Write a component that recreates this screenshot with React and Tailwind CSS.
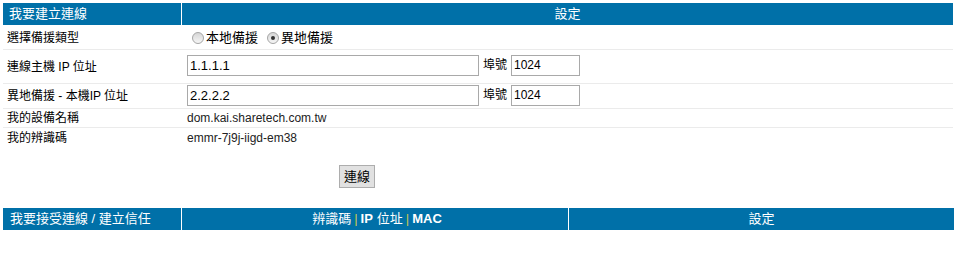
import React from "react";

const CJK = "font-['Liberation_Sans','Noto_Sans_CJK_TC',sans-serif]";

function Radio({ checked }) {
  return (
    <span className="relative inline-block w-[12px] h-[12px] rounded-full border border-[#a5a5a5] bg-gradient-to-b from-[#d6d6d6] to-[#f6f6f6] ml-[5px] mr-[2px]">
      {checked && (
        <span className="absolute left-[3px] top-[3px] w-[4px] h-[4px] rounded-full bg-[#333]" />
      )}
    </span>
  );
}

export default function App() {
  return (
    <div className={`${CJK} bg-white w-[954px] h-[269px] pt-[3px] pl-[3px] text-black`}>
      {/* top table */}
      <div className="w-[950px]">
        <div className="flex h-[22px] text-white text-[13px]">
          <div className="w-[178px] bg-[#0070a8] flex items-center pl-[6px]">我要建立連線</div>
          <div className="w-px bg-white" />
          <div className="flex-1 bg-[#0070a8] flex items-center justify-center">設定</div>
        </div>
        <div className="h-px" />
        <div className="flex h-[24px] border-b border-[#ebebeb] text-[12px]">
          <div className="w-[179px] flex items-center pl-[4px]">選擇備援類型</div>
          <div className="flex-1 flex items-center pl-[5px] pt-[1px]">
            <Radio />
            <span className="text-[13px]">本地備援</span>
            <span className="w-[4px]" />
            <Radio checked />
            <span className="text-[13px]">異地備援</span>
          </div>
        </div>
        <div className="flex h-[34px] border-b border-[#ebebeb] text-[12px]">
          <div className="w-[179px] flex items-center pl-[4px]">連線主機 IP 位址</div>
          <div className="flex-1 flex items-start pl-[5px] pt-[5px]">
            <div className="w-[292px] h-[21px] border border-[#a9a9a9] text-[13px] leading-[19px] pl-[2px]">1.1.1.1</div>
            <span className="ml-[4px] mr-[4px] h-[21px] leading-[21px] text-[12px]">埠號</span>
            <div className="w-[69px] h-[21px] border border-[#a9a9a9] text-[12px] leading-[19px] pl-[2px]">1024</div>
          </div>
        </div>
        <div className="flex h-[25px] border-b border-[#ebebeb] text-[12px]">
          <div className="w-[179px] flex items-center pl-[4px]">異地備援 - 本機IP 位址</div>
          <div className="flex-1 flex items-start pl-[5px] pt-[1px]">
            <div className="w-[292px] h-[21px] border border-[#a9a9a9] text-[13px] leading-[19px] pl-[2px]">2.2.2.2</div>
            <span className="ml-[4px] mr-[4px] h-[21px] leading-[21px] text-[12px]">埠號</span>
            <div className="w-[69px] h-[21px] border border-[#a9a9a9] text-[12px] leading-[19px] pl-[2px]">1024</div>
          </div>
        </div>
        <div className="flex h-[19px] border-b border-[#ebebeb] text-[12px]">
          <div className="w-[179px] flex items-center pl-[4px]">我的設備名稱</div>
          <div className="flex-1 flex items-center pl-[5px] text-[#222]">dom.kai.sharetech.com.tw</div>
        </div>
        <div className="flex h-[19px] text-[12px]">
          <div className="w-[179px] flex items-center pl-[4px]">我的辨識碼</div>
          <div className="flex-1 flex items-center pl-[5px] text-[#222]">emmr-7j9j-iigd-em38</div>
        </div>
      </div>

      {/* button */}
      <div className="h-[61px] pt-[17px] pl-[336px]">
        <button className="w-[36px] h-[23px] border border-[#adadad] bg-[#e1e1e1] text-[13px] leading-[21px] text-black p-0">連線</button>
      </div>

      {/* bottom table */}
      <div className="w-[951px] flex h-[22px] text-white text-[13px]">
        <div className="w-[178px] bg-[#0070a8] flex items-center pl-[7px]">我要接受連線 / 建立信任</div>
        <div className="w-px bg-white" />
        <div className="w-[386px] bg-[#0070a8] flex items-center justify-center pl-[4px]">
          <span>辨識碼</span>
          <span className="text-[#c8c850] mx-[3px]">|</span>
          <span className="font-bold">IP</span>
          <span className="ml-[4px]">位址</span>
          <span className="text-[#c8c850] mx-[3px]">|</span>
          <span className="font-bold">MAC</span>
        </div>
        <div className="w-px bg-white" />
        <div className="flex-1 bg-[#0070a8] flex items-center justify-center">設定</div>
      </div>
    </div>
  );
}
